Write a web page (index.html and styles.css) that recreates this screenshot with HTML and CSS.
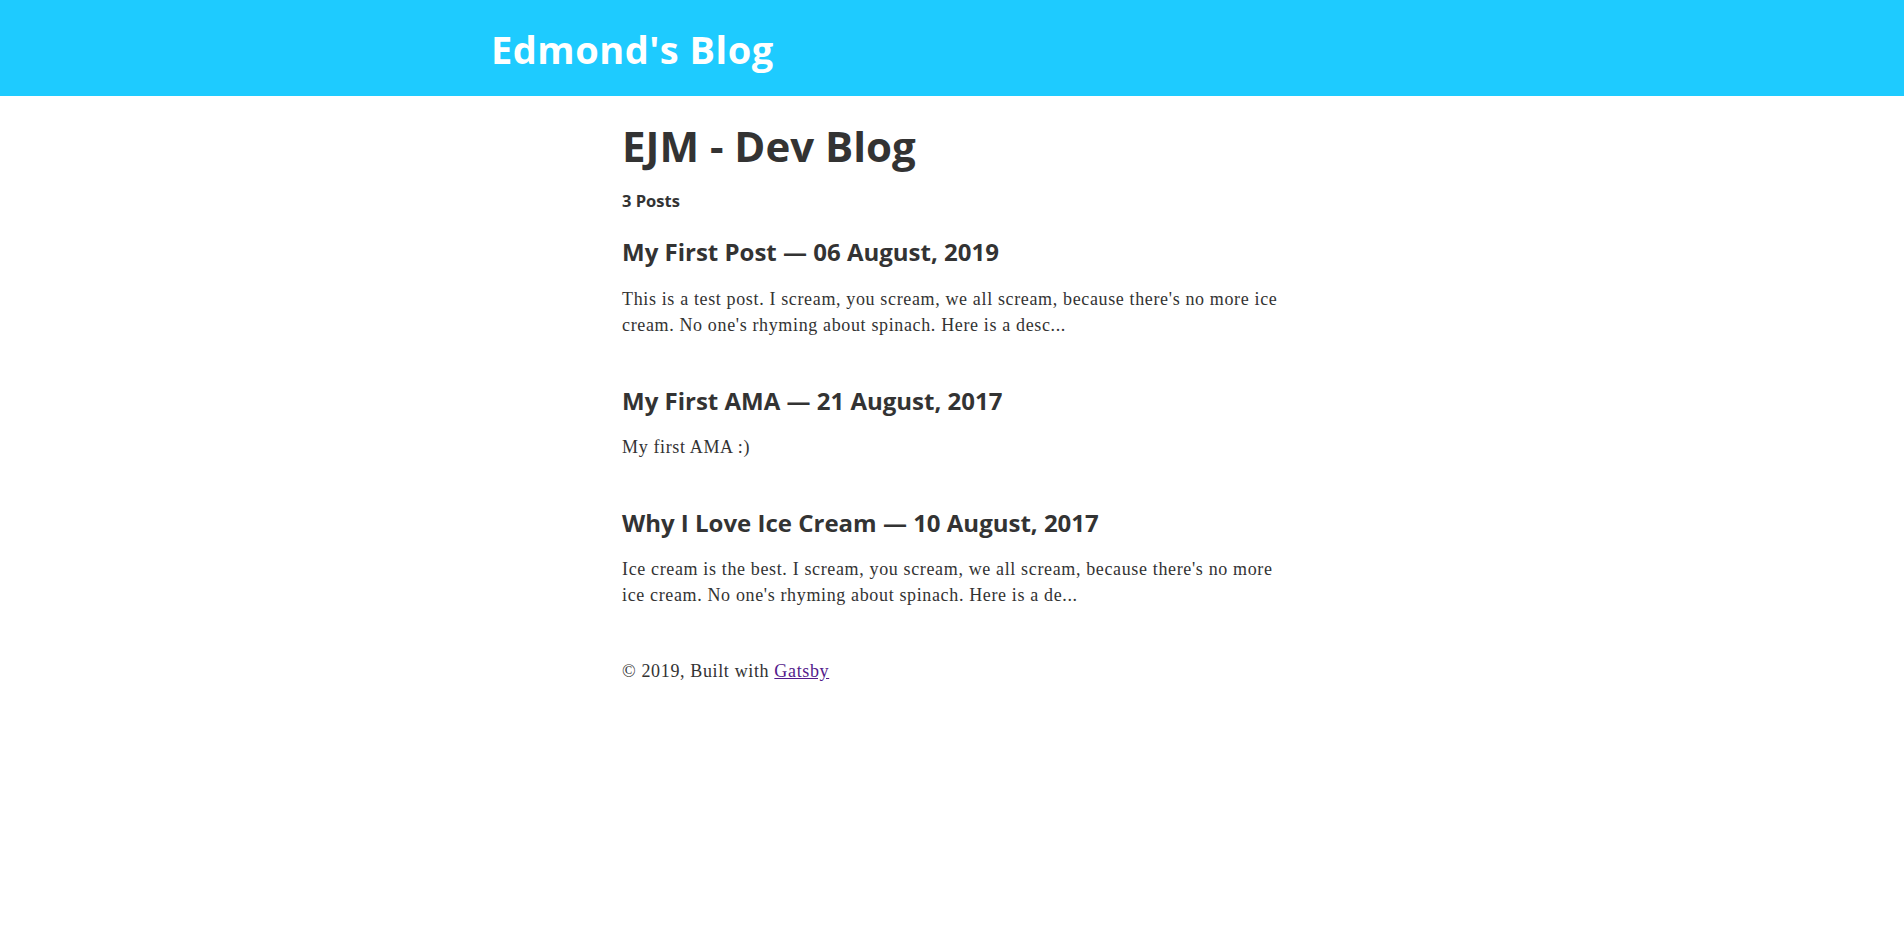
FILE: index.html
```html
<!DOCTYPE html>
<html lang="en">
<head>
<meta charset="utf-8">
<title>EJM - Dev Blog</title>
<link rel="stylesheet" href="styles.css">
</head>
<body>
<header class="site-header">
  <div class="header-inner">
    <h1 class="site-title"><a href="#" class="site-title-link">Edmond's Blog</a></h1>
  </div>
</header>
<main class="page">
  <h1 class="page-title">EJM - Dev Blog</h1>
  <h4 class="post-count">3 Posts</h4>
  <article class="post">
    <h3 class="post-title">My First Post — 06 August, 2019</h3>
    <p class="post-excerpt">This is a test post. I scream, you scream, we all scream, because there's no more ice cream. No one's rhyming about spinach. Here is a desc...</p>
  </article>
  <article class="post">
    <h3 class="post-title">My First AMA — 21 August, 2017</h3>
    <p class="post-excerpt">My first AMA :)</p>
  </article>
  <article class="post">
    <h3 class="post-title">Why I Love Ice Cream — 10 August, 2017</h3>
    <p class="post-excerpt">Ice cream is the best. I scream, you scream, we all scream, because there's no more ice cream. No one's rhyming about spinach. Here is a de...</p>
  </article>
  <footer class="site-footer">© 2019, Built with <a href="#" class="footer-link">Gatsby</a></footer>
</main>
</body>
</html>
```

FILE: styles.css
```css
*, *::before, *::after {
  box-sizing: border-box;
}

html, body {
  margin: 0;
  padding: 0;
  background: #ffffff;
}

body {
  font-family: "Liberation Serif", serif;
  font-size: 18px;
  letter-spacing: 0.64px;
  line-height: 26px;
  color: #333333;
}

.site-header {
  background: #1ecbff;
  height: 96px;
}

.header-inner {
  max-width: 960px;
  margin: 0 auto;
  padding: 24px 19px 0;
}

.site-title {
  margin: 0;
  font-family: "Open Sans", sans-serif;
  font-weight: 700;
  font-size: 38px;
  letter-spacing: 0.5px;
  line-height: 50px;
}

.site-title-link {
  color: #ffffff;
  text-decoration: none;
}

.page {
  width: 660px;
  margin: 0 auto;
  padding-top: 27px;
}

.page-title {
  margin: 0;
  font-family: "Open Sans", sans-serif;
  font-weight: 700;
  font-size: 42px;
  letter-spacing: 0;
  line-height: 1.1;
  color: #333333;
}

.post-count {
  margin: 19px 0 25px;
  font-family: "Open Sans", sans-serif;
  font-weight: 700;
  font-size: 16.5px;
  letter-spacing: 0;
  line-height: 26px;
}

.post {
  margin-bottom: 50px;
}

.post-title {
  margin: 0 0 20px;
  font-family: "Open Sans", sans-serif;
  font-weight: 700;
  font-size: 24px;
  letter-spacing: 0;
  line-height: 1.1;
}

.post-excerpt {
  margin: 0;
}

.site-footer {
  margin-top: 50px;
}

.footer-link {
  color: #551a8b;
}
```
